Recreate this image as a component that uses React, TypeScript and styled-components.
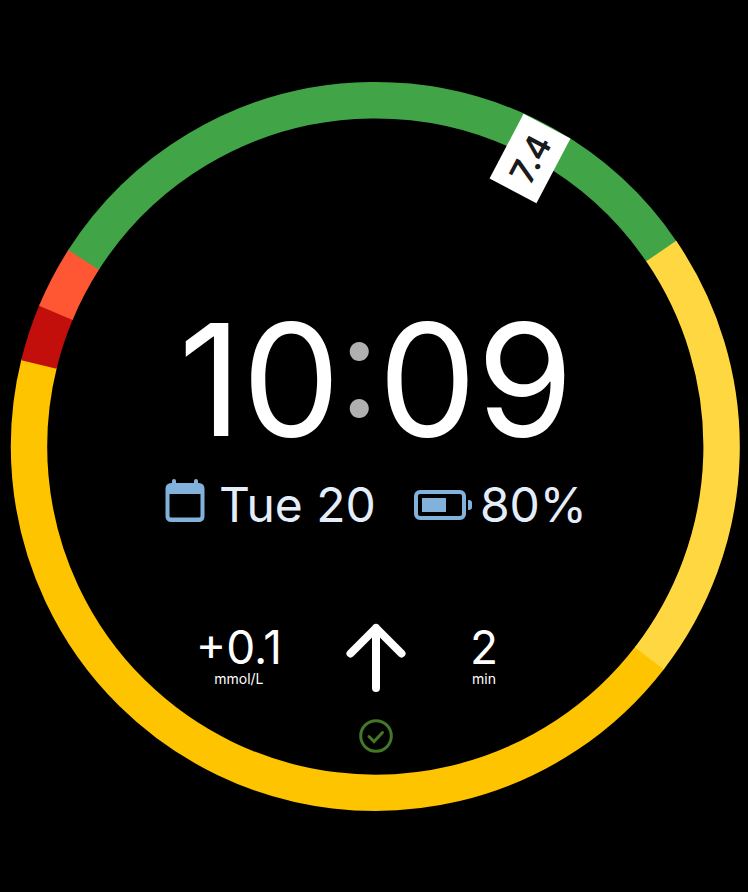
import React from "react";
import styled, { createGlobalStyle } from "styled-components";

const GlobalStyle = createGlobalStyle`
  * { box-sizing: border-box; }
  html, body { margin: 0; background: #000; }
  body {
    font-family: Inter, "Liberation Sans", sans-serif;
    color: #fff;
  }
`;

const Page = styled.main`
  min-height: 100vh;
  display: grid;
  align-items: center;
  background: #000;
`;

const Face = styled.section`
  display: grid;
  grid-template-columns: minmax(0, 1fr);
  width: 100%;
  max-width: 900px;
  margin: 0 auto;
`;

const Gauge = styled.svg`
  grid-area: 1 / 1;
  display: block;
  width: 100%;
  height: auto;
`;

const GaugeValue = styled.text`
  font-family: Inter, sans-serif;
  font-size: 34px;
  font-weight: 600;
  fill: #1a1a1a;
`;

const Readings = styled.div`
  grid-area: 1 / 1;
  display: flex;
  flex-direction: column;
  align-items: center;
  padding-top: 230px;
  padding-left: 4px;
`;

const Time = styled.time`
  display: flex;
  align-items: flex-start;
  font-size: 156px;
  line-height: 156px;
  font-weight: 400;
`;

const Colon = styled.span`
  font-family: Lato, sans-serif;
  font-size: 152px;
  line-height: 112px;
  color: #b0b0b0;
`;

const InfoRow = styled.div`
  display: flex;
  align-items: center;
  gap: 38px;
  margin-top: 21px;
`;

const Info = styled.div<{ $gap: number }>`
  display: flex;
  align-items: center;
  gap: ${(p) => p.$gap}px;
  color: #e3eefa;
  font-size: 48px;
  line-height: 52px;
  font-weight: 400;
  white-space: nowrap;
`;

const Icon = styled.svg`
  display: block;
  flex: none;
`;

const Stats = styled.div`
  display: grid;
  grid-template-columns: 1fr 60px 1fr;
  column-gap: 64px;
  width: 100%;
  margin-top: 92px;
`;

const Stat = styled.div<{ $side: "start" | "end" }>`
  justify-self: ${(p) => p.$side};
  text-align: center;
`;

const StatValue = styled.div`
  font-size: 46px;
  line-height: 48px;
  font-weight: 400;
`;

const StatUnit = styled.div`
  font-size: 14px;
  line-height: 16px;
  font-weight: 400;
`;

const Status = styled.div`
  margin-top: 26px;
`;

const CX = 375.3;
const CY = 374.5;
const R = 346.3;

// Neighbours overlap slightly so that no seam shows between two colours.
const segments = [
  { from: 127.5, to: 283.9, color: "#ffc400" },
  { from: 283.7, to: 292.9, color: "#c30f0c" },
  { from: 292.7, to: 302.8, color: "#ff5733" },
  { from: 302.6, to: 415.85, color: "#41a447" },
  { from: 55.65, to: 127.7, color: "#ffd740" },
];

function arc(from: number, to: number) {
  const point = (deg: number) => {
    const a = (deg * Math.PI) / 180;
    return `${CX + R * Math.sin(a)} ${CY - R * Math.cos(a)}`;
  };
  return `M${point(from)}A${R} ${R} 0 ${to - from > 180 ? 1 : 0} 1 ${point(to)}`;
}

export default function App() {
  return (
    <>
      <GlobalStyle />
      <Page>
        <Face aria-label="Watch face">
          <Gauge viewBox="0 0 748 748" role="img" aria-label="Glucose 7.4">
            {segments.map((s) => (
              <path key={s.from} d={arc(s.from, s.to)} fill="none" stroke={s.color} strokeWidth="36.4" />
            ))}
            <g transform="translate(530 86.5) rotate(-62.2)">
              <rect x="-36.5" y="-26.5" width="73" height="53" fill="#fff" />
              <GaugeValue x="0" y="13" textAnchor="middle">7.4</GaugeValue>
            </g>
          </Gauge>
          <Readings>
            <Time dateTime="10:09">
              <span>10</span>
              <Colon>:</Colon>
              <span>09</span>
            </Time>
            <InfoRow>
              <Info $gap={14}>
                <Icon width="40" height="52" viewBox="0 4 40 52" aria-hidden="true">
                  <path
                    fill="#82b1dc"
                    fillRule="evenodd"
                    d="M7 8V6a2 2 0 0 1 4 0V8h18V6a2 2 0 0 1 4 0V8h1a5.500 5.500 0 0 1 5.500 5.500v28A5.500 5.500 0 0 1 34 47H6a5.500 5.500 0 0 1-5.500-5.500v-28A5.500 5.500 0 0 1 6 8zM4.500 19v22a1.500 1.500 0 0 0 1.500 1.500h28a1.500 1.500 0 0 0 1.500-1.500V19z"
                  />
                </Icon>
                <span>Tue 20</span>
              </Info>
              <Info $gap={8}>
                <Icon width="58" height="32" viewBox="0 0 58 32" aria-hidden="true">
                  <rect x="2" y="3" width="48" height="26" rx="4" fill="none" stroke="#82b1dc" strokeWidth="4" />
                  <rect x="8" y="9" width="24" height="14" fill="#82b1dc" />
                  <path d="M54 11h1a3 3 0 0 1 3 3v4a3 3 0 0 1-3 3h-1z" fill="#82b1dc" />
                </Icon>
                <span>80%</span>
              </Info>
            </InfoRow>
            <Stats>
              <Stat $side="end">
                <StatValue>+0.1</StatValue>
                <StatUnit>mmol/L</StatUnit>
              </Stat>
              <Icon width="60" height="70" viewBox="0 0 60 70" role="img" aria-label="Rising">
                <path
                  d="M30 65V5M4.500 30.500L30 5L55.500 30.500"
                  fill="none"
                  stroke="#fff"
                  strokeWidth="8"
                  strokeLinecap="round"
                  strokeLinejoin="round"
                />
              </Icon>
              <Stat $side="start">
                <StatValue>2</StatValue>
                <StatUnit>min</StatUnit>
              </Stat>
            </Stats>
            <Status>
              <Icon width="34" height="34" viewBox="0 0 34 34" role="img" aria-label="Connected">
                <g fill="none" stroke="#447726" strokeWidth="3">
                  <circle cx="17" cy="17" r="15.300" />
                  <path d="M10 17.500l5 5l8.500-9" strokeLinecap="round" />
                </g>
              </Icon>
            </Status>
          </Readings>
        </Face>
      </Page>
    </>
  );
}
